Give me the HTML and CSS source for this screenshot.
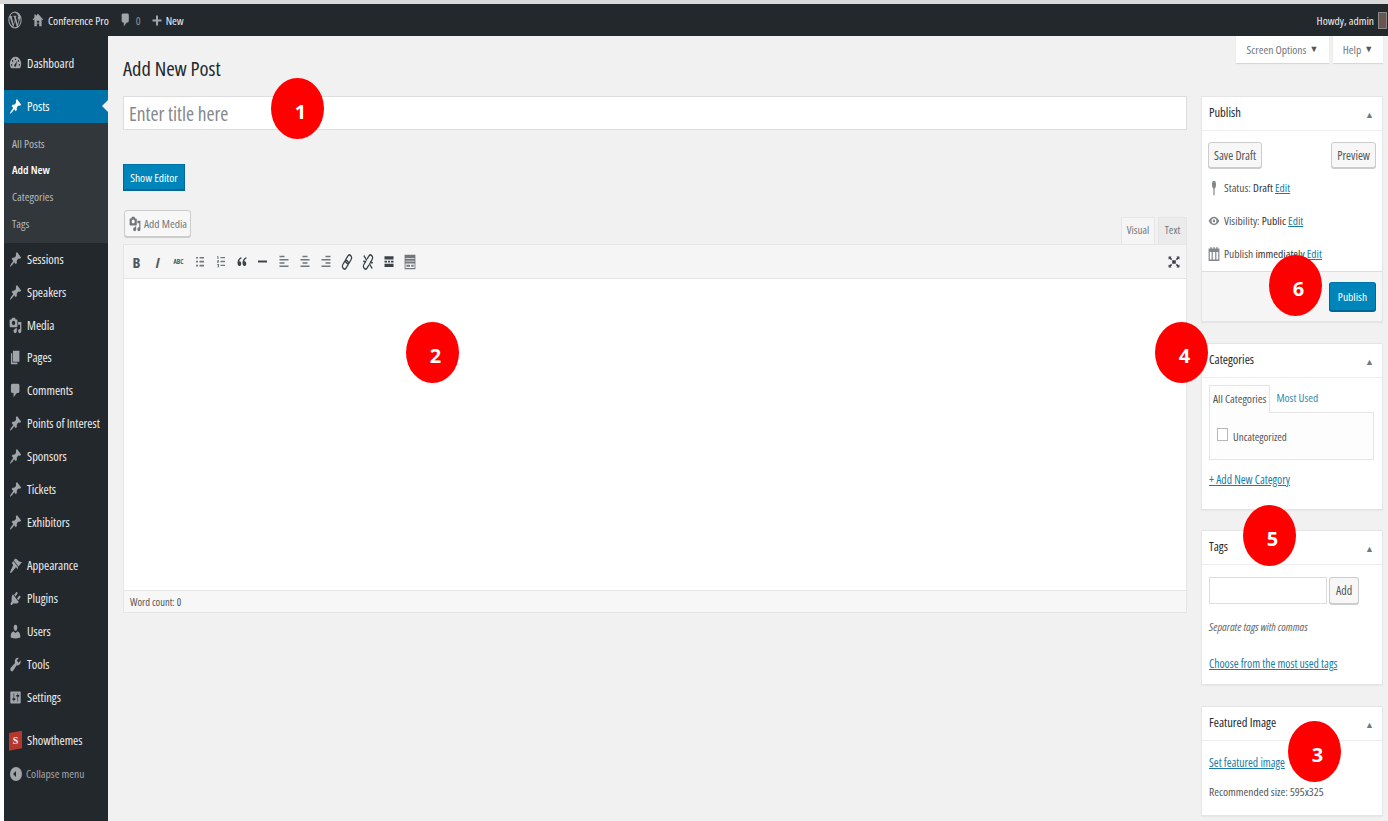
FILE: index.html
```html
<!DOCTYPE html>
<html lang="en">
  <head>
    <meta charset="UTF-8" />
    <title>Add New Post</title>
    <link rel="stylesheet" href="styles.css">
  </head>
  <body>
    <svg class="defs" width="0" height="0">
      <symbol id="i-pin" viewBox="0 0 20 20" preserveAspectRatio="none"><path d="M10.440 3.020l1.820-1.820 6.360 6.350-1.830 1.820c-1.050-.68-2.480-.57-3.410.36l-.75.750c-.92.930-1.040 2.350-.35 3.410l-1.830 1.820-2.410-2.410-2.800 2.790c-.42.420-3.380 2.710-3.800 2.290s1.860-3.390 2.280-3.810l2.790-2.790L4.100 9.360l1.830-1.820c1.050.690 2.480.570 3.400-.36l.750-.750c.930-.920 1.050-2.350.360-3.410z"/></symbol>
      <symbol id="i-media" viewBox="0 0 20 20" preserveAspectRatio="none"><path d="M13 11V4c0-.55-.45-1-1-1h-1.670L9 1H5L3.670 3H2c-.55 0-1 .45-1 1v7c0 .55.45 1 1 1h10c.55 0 1-.45 1-1zM7 4.500c1.380 0 2.500 1.120 2.500 2.500S8.380 9.500 7 9.500 4.500 8.380 4.500 7 5.620 4.500 7 4.500zM14 6h5v10.500c0 1.380-1.120 2.500-2.500 2.500S14 17.880 14 16.500s1.120-2.500 2.500-2.500c.17 0 .34.020.5.050V9h-3V6zm-4 8.050V13h2v3.500c0 1.380-1.120 2.500-2.500 2.500S7 17.880 7 16.500 8.120 14 9.500 14c.17 0 .34.020.5.050z"/></symbol>
      <symbol id="i-pages" viewBox="0 0 20 20" preserveAspectRatio="none"><path d="M6 15V2h10v13H6zm-1 1h8v2H3V5h2v11z"/></symbol>
      <symbol id="i-bubble" viewBox="0 0 20 20" preserveAspectRatio="none"><path d="M5 2h9c1.100 0 2 .9 2 2v7c0 1.100-.9 2-2 2h-2l-5 5v-5H5c-1.100 0-2-.9-2-2V4c0-1.100.9-2 2-2z"/></symbol>
      <symbol id="i-brush" viewBox="0 0 20 20" preserveAspectRatio="none"><path d="M14.480 11.060L7.410 3.990l1.500-1.500c.5-.56 2.300-.47 3.510.32 1.210.8 1.430 1.280 2.910 2.100 1.180.64 2.450 1.260 4.670.85zm-.71.71L6.700 4.700 4.930 6.470c-.39.39-.39 1.020 0 1.410l1.060 1.060c.39.39.39 1.030 0 1.420L2 17c-.5.500-.5 1 0 1.500s1 .5 1.500 0l6.500-6c.4-.4 1-.4 1.400 0l1 1c.4.4 1 .4 1.400 0z"/></symbol>
      <symbol id="i-plugin" viewBox="0 0 20 20" preserveAspectRatio="none"><path d="M13.110 4.360L9.870 7.600 8 5.730l3.240-3.240c.35-.34 1.050-.2 1.560.32.520.51.660 1.210.310 1.550zm-8 1.770l.91-1.120 9.010 9.010-1.190.84c-.71.71-2.630 1.160-3.820 1.160H6.140L4.900 17.260c-.59.59-1.540.59-2.120 0-.59-.58-.59-1.530 0-2.120l1.240-1.240v-3.880c0-1.130.4-3.190 1.090-3.890zm7.260 3.970l3.240-3.240c.34-.35 1.040-.21 1.550.31.520.51.660 1.210.310 1.550l-3.240 3.250z"/></symbol>
      <symbol id="i-user" viewBox="0 0 20 20" preserveAspectRatio="none"><path d="M10 9.250c-2.270 0-2.730-3.440-2.730-3.440C7 4.020 7.820 2 9.970 2c2.160 0 2.980 2.020 2.710 3.810 0 0-.41 3.440-2.680 3.440zm0 2.570L12.720 10c2.390 0 4.520 2.330 4.520 4.530v2.490s-3.650 1.130-7.240 1.130c-3.650 0-7.240-1.130-7.240-1.130v-2.490c0-2.250 1.940-4.480 4.470-4.480z"/></symbol>
      <symbol id="i-tool" viewBox="0 0 20 20" preserveAspectRatio="none"><path d="M16.680 9.770c-1.340 1.340-3.300 1.670-4.950.99l-5.410 6.520c-.99.99-2.590.99-3.580 0s-.99-2.590 0-3.570l6.520-5.420c-.68-1.650-.35-3.610.99-4.950 1.280-1.280 3.120-1.620 4.720-1.060l-2.890 2.890 2.820 2.820 2.860-2.870c.53 1.580.18 3.400-1.080 4.650z"/></symbol>
      <symbol id="i-settings" viewBox="0 0 20 20" preserveAspectRatio="none"><path d="M18 16V4c0-.55-.45-1-1-1H3c-.55 0-1 .45-1 1v12c0 .55.45 1 1 1h14c.55 0 1-.45 1-1zM8 11h1c.55 0 1 .45 1 1s-.45 1-1 1H8v1.500c0 .28-.22.5-.5.5s-.5-.22-.5-.5V13H6c-.55 0-1-.45-1-1s.45-1 1-1h1V5.500c0-.28.22-.5.5-.5s.5.22.5.5V11zm5-2h-1c-.55 0-1-.45-1-1s.45-1 1-1h1V5.500c0-.28.22-.5.5-.5s.5.22.5.5V7h1c.55 0 1 .45 1 1s-.45 1-1 1h-1v5.500c0 .28-.22.5-.5.5s-.5-.22-.5-.5V9z"/></symbol>
      <symbol id="i-dash" viewBox="0 0 20 20" preserveAspectRatio="none"><path fill-rule="evenodd" d="M10 2a8.500 8.500 0 0 1 7 13.500H3A8.500 8.500 0 0 1 10 2zM10 4a1 1 0 1 0 0 2 1 1 0 0 0 0-2zM5.500 6a1 1 0 1 0 0 2 1 1 0 0 0 0-2zM14.500 6a1 1 0 1 0 0 2 1 1 0 0 0 0-2zM4 10.500a1 1 0 1 0 0 2 1 1 0 0 0 0-2zM16 10.500a1 1 0 1 0 0 2 1 1 0 0 0 0-2zM12.500 7L9 11a1.500 1.500 0 1 0 2 1.500z"/></symbol>
      <symbol id="i-ul" viewBox="0 0 20 20" preserveAspectRatio="none"><path d="M2 3h4v2.500H2zM9 3h9v2.500H9zM2 9h4v2.500H2zM9 9h9v2.500H9zM2 15h4v2.500H2zM9 15h9v2.500H9z"/></symbol>
      <symbol id="i-ol" viewBox="0 0 20 20" preserveAspectRatio="none"><path d="M2 2h3v4H3V3.500H2zM9 3h9v2H9zM2 8h4v2L4 11h2v1H2v-2l2-1H2zM9 9h9v2H9zM2 14h4v5H2v-1h2v-1H3v-1h1v-1H2zM9 15h9v2H9z"/></symbol>
      <symbol id="i-quote" viewBox="0 0 20 20" preserveAspectRatio="none"><path d="M8.500 3C4 4.500 1 7.500 1 12c0 3 1.500 5 3.700 5S8.500 15.500 8.500 13.300 7 9.800 5 9.800c-.3 0-.5 0-.7.100C4.700 7.800 6.300 6.300 9 5.200zM18.500 3C14 4.500 11 7.500 11 12c0 3 1.500 5 3.700 5s3.800-1.500 3.800-3.700-1.500-3.500-3.500-3.500c-.3 0-.5 0-.7.100.4-2.100 2-3.600 4.700-4.700z"/></symbol>
      <symbol id="i-hr" viewBox="0 0 20 20" preserveAspectRatio="none"><path d="M0 8.500h20v3H0z"/></symbol>
      <symbol id="i-left" viewBox="0 0 20 20" preserveAspectRatio="none"><path d="M1 1h10v2.500H1zM1 6h18v2.500H1zM1 11h10v2.500H1zM1 16h18v2.500H1z"/></symbol>
      <symbol id="i-center" viewBox="0 0 20 20" preserveAspectRatio="none"><path d="M5 1h10v2.500H5zM1 6h18v2.500H1zM5 11h10v2.500H5zM1 16h18v2.500H1z"/></symbol>
      <symbol id="i-right" viewBox="0 0 20 20" preserveAspectRatio="none"><path d="M9 1h10v2.500H9zM1 6h18v2.500H1zM9 11h10v2.500H9zM1 16h18v2.500H1z"/></symbol>
      <symbol id="i-link" viewBox="0 0 20 20" preserveAspectRatio="none"><g fill="none" stroke="currentColor" stroke-width="2" transform="rotate(38 10 10)"><rect x="6.500" y="0" width="7" height="11.500" rx="3.500"/><rect x="6.500" y="8.500" width="7" height="11.500" rx="3.500"/></g></symbol>
      <symbol id="i-unlink" viewBox="0 0 20 20" preserveAspectRatio="none"><g fill="none" stroke="currentColor" stroke-width="2" transform="rotate(38 10 10)"><path d="M6.500 8V3.500a3.500 3.500 0 0 1 7 0V8M6.500 12v4.500a3.500 3.500 0 0 0 7 0V12"/></g><path fill="none" stroke="currentColor" stroke-width="2" d="M3 2l5 6M12 12l5 6M2 9l5 .5M13 10.500l5 .5"/></symbol>
      <symbol id="i-more" viewBox="0 0 20 20" preserveAspectRatio="none"><path d="M1 2h18v5H1zM1 9h5v2.500H1zM8 9h4v2.500H8zM14 9h5v2.500h-5zM1 13.500h18v5H1z"/></symbol>
      <symbol id="i-kitchen" viewBox="0 0 20 20" preserveAspectRatio="none"><path fill-rule="evenodd" d="M1 1h18v18H1zM2.500 5v1h15V5zM2.500 8.500v1h15v-1zM2.500 12v5.500h15V12zM4 13.500h6v2.500H4zM12 13.500h4v2.500h-4z"/></symbol>
      <symbol id="i-full" viewBox="0 0 20 20" preserveAspectRatio="none"><path d="M1 1h5L4.500 2.700 7 5.200 5.200 7 2.700 4.500 1 6zM19 1v5l-1.700-1.500L14.800 7 13 5.200l2.500-2.500L14 1zM1 19v-5l1.700 1.500L5.200 13 7 14.800l-2.500 2.500L6 19zM19 19h-5l1.500-1.700L13 14.800l1.800-1.800 2.500 2.500L19 14zM7 7h6v6H7z"/></symbol>
      <symbol id="i-eye" viewBox="0 0 20 20" preserveAspectRatio="none"><path fill-rule="evenodd" d="M10 4c4 0 7 3 9 6-2 3-5 6-9 6s-7-3-9-6c2-3 5-6 9-6zM10 6a4 4 0 1 0 0 8 4 4 0 0 0 0-8zM10 8a2 2 0 1 1 0 4 2 2 0 0 1 0-4z"/></symbol>
      <symbol id="i-cal" viewBox="0 0 20 20" preserveAspectRatio="none"><path fill-rule="evenodd" d="M4 0h2v2h3V0h2v2h3V0h2v2h3v18H1V2h3zM3 7v11h3V7zM8 7v11h4V7zM14 7v11h3V7z"/></symbol>
      <symbol id="i-status" viewBox="0 0 20 20" preserveAspectRatio="none"><path d="M10 1a5 5 0 0 1 1.500 9.800V19h-3v-8.200A5 5 0 0 1 10 1z"/></symbol>
      <symbol id="i-wp" viewBox="0 0 20 20" preserveAspectRatio="none"><path fill-rule="evenodd" d="M10 .5a9.500 9.500 0 1 1 0 19 9.500 9.500 0 0 1 0-19zM10 2a8 8 0 0 0-6.700 3.600h.6c.8 0 2.100-.1 2.100-.1.400 0 .5.600 0 .6l-.9.100 2.900 8.600 1.700-5.200L8.500 6.100l-.8-.1c-.4 0-.4-.6.100-.6 0 0 1.300.1 2 .1s2.100-.1 2.100-.1c.4 0 .5.600 0 .6l-.9.100 2.900 8.600.8-2.600c.6-1.900.2-3-.5-4.100-.5-.8-.3-1.900.8-2A8 8 0 0 0 10 2zM2.600 7A8 8 0 0 0 7 17.200zM10.100 10.700l-2.400 7a8 8 0 0 0 4.900-.1zM17.100 6.600c.3 2.400-.8 4.300-3.200 10.400A8 8 0 0 0 17.100 6.600z"/></symbol>
      <symbol id="i-home" viewBox="0 0 20 20" preserveAspectRatio="none"><path fill-rule="evenodd" d="M10 1l9 8.500-1 1L16 9v10H4V9l-2 1.500-1-1 3-2.900V2h2.500v2.300zM8 11v3h4v-3zM8 15v4h4v-4z"/></symbol>
      <symbol id="i-plus" viewBox="0 0 20 20" preserveAspectRatio="none"><path d="M8 1h4v7h7v4h-7v7H8v-7H1V8h7z"/></symbol>
    </svg>

    <div class="topline"></div>
    <div class="adminbar">
      <svg class="bar-ico wp"><use href="#i-wp"/></svg>
      <svg class="bar-ico home"><use href="#i-home"/></svg>
      <span class="bar-txt">Conference Pro</span>
      <svg class="bar-ico bub"><use href="#i-bubble"/></svg>
      <span class="bar-txt dim">0</span>
      <svg class="bar-ico plus"><use href="#i-plus"/></svg>
      <span class="bar-txt">New</span>
      <span class="howdy">Howdy, admin</span>
      <span class="avatar"></span>
    </div>

    <div class="wrap">
      <nav class="side">
        <a class="item first"><svg><use href="#i-dash"/></svg>Dashboard</a>
        <a class="item current"><svg><use href="#i-pin"/></svg>Posts</a>
        <div class="sub">
          <a>All Posts</a>
          <a class="on">Add New</a>
          <a>Categories</a>
          <a>Tags</a>
        </div>
        <a class="item"><svg><use href="#i-pin"/></svg>Sessions</a>
        <a class="item"><svg><use href="#i-pin"/></svg>Speakers</a>
        <a class="item"><svg><use href="#i-media"/></svg>Media</a>
        <a class="item"><svg><use href="#i-pages"/></svg>Pages</a>
        <a class="item"><svg><use href="#i-bubble"/></svg>Comments</a>
        <a class="item"><svg><use href="#i-pin"/></svg>Points of Interest</a>
        <a class="item"><svg><use href="#i-pin"/></svg>Sponsors</a>
        <a class="item"><svg><use href="#i-pin"/></svg>Tickets</a>
        <a class="item"><svg><use href="#i-pin"/></svg>Exhibitors</a>
        <a class="item gap"><svg><use href="#i-brush"/></svg>Appearance</a>
        <a class="item"><svg><use href="#i-plugin"/></svg>Plugins</a>
        <a class="item"><svg><use href="#i-user"/></svg>Users</a>
        <a class="item"><svg><use href="#i-tool"/></svg>Tools</a>
        <a class="item"><svg><use href="#i-settings"/></svg>Settings</a>
        <a class="item gap"><span class="st-logo">S</span>Showthemes</a>
        <a class="item collapse"><span class="coll-ico"></span>Collapse menu</a>
      </nav>

      <main class="content">
        <div class="tabs-top">
          <span class="meta-tab screen">Screen Options <i>▼</i></span>
          <span class="meta-tab help">Help <i>▼</i></span>
        </div>
        <div class="cols">
          <div class="main-col">
            <h1>Add New Post</h1>
            <div class="title-input">Enter title here</div>
            <button class="btn primary show-editor">Show Editor</button>
            <div class="media-row">
              <button class="btn media-btn"><svg><use href="#i-media"/></svg>Add Media</button>
              <div class="ed-tabs"><span class="ed-tab active">Visual</span><span class="ed-tab">Text</span></div>
            </div>
            <div class="editor">
              <div class="toolbar">
                <span class="tb b">B</span>
                <span class="tb i">I</span>
                <span class="tb abc">ABC</span>
                <span class="tb lines"><svg><use href="#i-ul"/></svg></span>
                <span class="tb lines"><svg><use href="#i-ol"/></svg></span>
                <span class="tb"><svg><use href="#i-quote"/></svg></span>
                <span class="tb hr"><svg><use href="#i-hr"/></svg></span>
                <span class="tb lines"><svg><use href="#i-left"/></svg></span>
                <span class="tb lines"><svg><use href="#i-center"/></svg></span>
                <span class="tb lines"><svg><use href="#i-right"/></svg></span>
                <span class="tb big"><svg><use href="#i-link"/></svg></span>
                <span class="tb big"><svg><use href="#i-unlink"/></svg></span>
                <span class="tb"><svg><use href="#i-more"/></svg></span>
                <span class="tb big lines"><svg><use href="#i-kitchen"/></svg></span>
                <span class="tb full"><svg><use href="#i-full"/></svg></span>
              </div>
              <div class="ed-area"></div>
              <div class="ed-status">Word count: 0</div>
            </div>
          </div>

          <aside class="side-col">
            <section class="box publish">
              <header>Publish<i>▲</i></header>
              <div class="pub-btns">
                <button class="btn">Save Draft</button>
                <button class="btn">Preview</button>
              </div>
              <div class="pub-line first"><svg class="thin"><use href="#i-status"/></svg><span>Status: <b>Draft</b> <a>Edit</a></span></div>
              <div class="pub-line"><svg><use href="#i-eye"/></svg><span>Visibility: <b>Public</b> <a>Edit</a></span></div>
              <div class="pub-line"><svg><use href="#i-cal"/></svg><span>Publish <b>immediately</b> <a>Edit</a></span></div>
              <div class="pub-foot"><button class="btn primary">Publish</button></div>
            </section>

            <section class="box cats">
              <header>Categories<i>▲</i></header>
              <div class="cat-tabs"><span class="cat-tab active">All Categories</span><span class="cat-tab link">Most Used</span></div>
              <div class="cat-list"><span class="check"></span>Uncategorized</div>
              <a class="box-link add-cat">+ Add New Category</a>
            </section>

            <section class="box tags">
              <header>Tags<i>▲</i></header>
              <div class="tag-row"><span class="tag-input"></span><button class="btn">Add</button></div>
              <p class="howto">Separate tags with commas</p>
              <a class="box-link most-used">Choose from the most used tags</a>
            </section>

            <section class="box featured">
              <header>Featured Image<i>▲</i></header>
              <a class="box-link set-img">Set featured image</a>
              <p class="rec">Recommended size: 595x325</p>
            </section>
          </aside>
        </div>
      </main>
    </div>

    <span class="mark m1">1</span>
    <span class="mark m2">2</span>
    <span class="mark m3">3</span>
    <span class="mark m4">4</span>
    <span class="mark m5">5</span>
    <span class="mark m6">6</span>
  </body>
</html>
```

FILE: styles.css
```css
:root {
  font-family: "Open Sans", "Liberation Sans", sans-serif;
  font-stretch: 75%;
  --blue: #0073aa;
  --dark: #23282d;
}
* {
  box-sizing: border-box;
}
html, body {
  height: 821px;
  overflow: hidden;
}
body {
  margin: 0;
  padding-left: 4px;
  background: #fff;
  font-size: 12px;
  color: #444;
  position: relative;
}
.defs {
  position: absolute;
}
svg {
  fill: currentColor;
}
.topline {
  height: 4px;
  margin-left: -4px;
  background: #d9d9d9;
}

/* admin bar */
.adminbar {
  height: 32px;
  background: var(--dark);
  color: #eee;
  display: flex;
  align-items: center;
}
.bar-ico {
  color: #a0a5aa;
  flex: none;
}
.bar-ico.wp {
  width: 14px;
  height: 18px;
  margin-left: 4px;
}
.bar-ico.home {
  width: 12px;
  height: 14px;
  margin-left: 10px;
}
.bar-ico.bub {
  width: 11px;
  height: 16px;
  margin-left: 11px;
}
.bar-ico.plus {
  width: 10px;
  height: 11px;
  margin-left: 11px;
}
.bar-txt {
  margin-left: 4px;
  font-size: 11.500px;
}
.bar-txt.dim {
  color: #8c9196;
  margin-left: 5px;
}
.howdy {
  margin-left: auto;
  font-size: 11.500px;
}
.avatar {
  width: 9px;
  height: 17px;
  margin: 0 1px 0 4px;
  background: #6a5650;
  border: 1px solid #888;
}

.wrap {
  display: flex;
  height: 785px;
}

/* left menu */
.side {
  width: 104px;
  flex: none;
  background: var(--dark);
  color: #eee;
  padding-top: 11px;
}
.item {
  display: flex;
  align-items: center;
  height: 32.900px;
  font-size: 12.500px;
  white-space: nowrap;
}
.item svg {
  width: 13px;
  height: 17px;
  margin-left: 5px;
  margin-right: 5px;
  color: #a0a5aa;
  flex: none;
}
.item.first {
  margin-bottom: 10px;
}
.item.gap {
  margin-top: 10.500px;
}
.item.current {
  background: var(--blue);
  color: #fff;
  position: relative;
}
.item.current svg {
  color: #fff;
}
.item.current::after {
  content: "";
  position: absolute;
  right: 0;
  top: 10px;
  border: 6px solid transparent;
  border-right-color: #f1f1f1;
  border-left: 0;
}
.sub {
  background: #32373c;
  height: 120px;
  padding-top: 8px;
  font-size: 11.500px;
  color: #b4b9be;
}
.sub a {
  display: block;
  height: 26.600px;
  line-height: 26px;
  padding-left: 8px;
}
.sub .on {
  color: #fff;
  font-weight: 600;
}
.st-logo {
  width: 13px;
  height: 20px;
  margin: 0 5px;
  background: #b5372e;
  color: #eee;
  font: bold 10px "Liberation Serif", serif;
  text-align: center;
  line-height: 20px;
  flex: none;
  clip-path: polygon(0 12%, 100% 0, 100% 88%, 0 100%);
}
.collapse {
  color: #a0a5aa;
  font-size: 11.500px;
}
.coll-ico {
  width: 12px;
  height: 14px;
  border-radius: 50%;
  background: #a0a5aa;
  margin: 0 4px 0 6px;
  flex: none;
  position: relative;
}
.coll-ico::after {
  content: "";
  position: absolute;
  left: 3px;
  top: 4px;
  border: 3px solid transparent;
  border-right-color: var(--dark);
  border-left: 0;
}

/* content */
.content {
  flex: 1;
  background: #f1f1f1;
  min-width: 0;
  position: relative;
}
.tabs-top {
  display: flex;
  justify-content: flex-end;
  gap: 4px;
  padding-right: 5px;
  height: 28px;
}
.meta-tab {
  background: #fff;
  height: 27px;
  text-align: center;
  font-size: 11.500px;
  line-height: 25px;
  color: #72777c;
  box-shadow: 0 1px 1px rgba(0, 0, 0, .1);
}
.meta-tab.screen {
  width: 93px;
}
.meta-tab.help {
  width: 50px;
}
.meta-tab i {
  font-style: normal;
  font-size: 9px;
  vertical-align: 2px;
  margin-left: 1px;
  color: #555;
}
.cols {
  display: flex;
  padding-left: 15px;
}
.main-col {
  width: 1064px;
  flex: none;
  margin-top: -28px;
}
h1 {
  margin: 0;
  padding-top: 16px;
  height: 60px;
  font-weight: 400;
  font-size: 20.500px;
  line-height: 32px;
  color: #23282d;
}
.title-input {
  height: 34px;
  background: #fff;
  border: 1px solid #ddd;
  font-size: 19.500px;
  line-height: 33px;
  padding-left: 5px;
  color: #84898e;
}
.btn {
  font: inherit;
  font-size: 12px;
  color: #555;
  background: #f7f7f7;
  border: 1px solid #ccc;
  border-radius: 3px;
  box-shadow: 0 1px 0 #ccc;
  height: 26px;
  padding: 0 5px;
  white-space: nowrap;
}
.btn.primary {
  background: #0085ba;
  border-color: #0073aa #006799 #006799;
  box-shadow: 0 1px 0 #006799;
  color: #fff;
}
.show-editor {
  display: block;
  margin-top: 34px;
  width: 62px;
  padding: 0;
  height: 26px;
  border-radius: 0;
  font-size: 11.500px;
}
.media-row {
  display: flex;
  justify-content: space-between;
  align-items: flex-end;
  margin-top: 20px;
  padding-left: 1px;
  height: 34px;
}
.media-btn {
  display: flex;
  align-items: center;
  height: 27px;
  width: 67px;
  align-self: flex-start;
  padding: 0 4px;
  color: #72777c;
  font-size: 11.500px;
}
.media-btn svg {
  width: 12px;
  height: 16px;
  margin-right: 3px;
  color: #72777c;
  flex: none;
}
.ed-tabs {
  display: flex;
  gap: 3px;
}
.ed-tab {
  height: 27px;
  width: 29px;
  text-align: center;
  line-height: 24px;
  font-size: 11px;
  color: #72777c;
  background: #ebebeb;
  border: 1px solid #e5e5e5;
  border-bottom: 0;
}
.ed-tab.active {
  background: #f5f5f5;
  width: 34px;
}
.editor {
  border: 1px solid #e5e5e5;
  background: #fff;
}
.toolbar {
  height: 34px;
  background: #f5f5f5;
  border-bottom: 1px solid #e5e5e5;
  display: flex;
  align-items: center;
  padding-left: 2px;
  color: #3c4248;
}
.tb {
  width: 21px;
  height: 16px;
  display: flex;
  align-items: center;
  justify-content: center;
}
.tb svg {
  width: 10px;
  height: 13px;
}
.tb.lines {
  color: #72777c;
}
.tb.hr svg {
  width: 9px;
}
.tb.big svg {
  width: 12px;
  height: 16px;
}
.tb.b {
  font-size: 15px;
  font-weight: 700;
  color: #50565c;
}
.tb.i {
  font-size: 15px;
  font-style: italic;
  font-weight: 700;
  color: #50565c;
}
.tb.abc {
  font-size: 7px;
  font-weight: 600;
}
.tb.full {
  margin-left: auto;
  margin-right: 2px;
}
.tb.full svg {
  width: 12px;
  height: 12px;
}
.ed-area {
  height: 311px;
}
.ed-status {
  height: 22px;
  background: #f7f7f7;
  border-top: 1px solid #e5e5e5;
  font-size: 10.500px;
  line-height: 23px;
  padding-left: 6px;
  color: #555;
}

/* side boxes */
.side-col {
  width: 182px;
  margin-left: 14px;
  flex: none;
  padding-top: 32px;
}
.box {
  background: #fff;
  border: 1px solid #e5e5e5;
  box-shadow: 0 1px 1px rgba(0, 0, 0, .04);
  position: relative;
}
.box header {
  height: 34px;
  border-bottom: 1px solid #eee;
  padding: 0 8px 0 7px;
  font-size: 12.500px;
  line-height: 32px;
  color: #23282d;
  font-weight: 500;
  display: flex;
  justify-content: space-between;
}
.box header i {
  font-style: normal;
  font-size: 9px;
  color: #72777c;
  line-height: 36px;
}
.publish {
  height: 226px;
}
.pub-btns {
  display: flex;
  justify-content: space-between;
  padding: 11px 6px 0 6px;
}
.pub-line {
  display: flex;
  align-items: center;
  height: 33px;
  padding-left: 6px;
  font-size: 11.500px;
  color: #555;
  white-space: pre;
}
.pub-line.first {
  margin-top: 3px;
}
.pub-line svg {
  width: 12px;
  height: 14px;
  color: #82878c;
  margin-right: 4px;
  flex: none;
}
.pub-line svg.thin {
  width: 8px;
  height: 16px;
  margin: 0 6px 0 2px;
}
.pub-line b {
  font-weight: 500;
  color: #333;
}
.pub-line a, .box-link {
  color: #1a7ba6;
  text-decoration: underline;
}
.pub-foot {
  position: absolute;
  left: 0;
  right: 0;
  bottom: 0;
  height: 50px;
  background: #f5f5f5;
  border-top: 1px solid #ddd;
  display: flex;
  justify-content: flex-end;
  padding: 10px 6px 0 0;
}
.pub-foot .btn {
  width: 47px;
  height: 29px;
  padding: 0;
  font-size: 11.500px;
}
.cats {
  height: 167px;
  margin-top: 21px;
}
.cat-tabs {
  display: flex;
  margin: 7px 0 0 7px;
  font-size: 11.500px;
  height: 28px;
  position: relative;
  z-index: 1;
}
.cat-tab {
  padding: 0 5px;
  line-height: 26px;
}
.cat-tab.link {
  color: #3a8bb0;
  margin-left: 1px;
}
.cat-tab.active {
  background: #fdfdfd;
  border: 1px solid #e5e5e5;
  border-bottom: 0;
  padding: 0 3px;
  color: #555;
}
.cat-list {
  margin: -1px 8px 0 7px;
  height: 48px;
  background: #fdfdfd;
  border: 1px solid #e5e5e5;
  display: flex;
  align-items: center;
  padding-left: 7px;
  font-size: 11px;
  color: #555;
}
.check {
  width: 11px;
  height: 13px;
  border: 1px solid #b4b9be;
  background: #fff;
  margin-right: 5px;
  margin-top: -4px;
}
.box-link {
  display: block;
  font-size: 11.700px;
  padding-left: 7px;
}
.add-cat {
  margin-top: 11px;
}
.tags {
  height: 155px;
  margin-top: 20px;
}
.tag-row {
  display: flex;
  gap: 2px;
  padding: 12px 0 0 7px;
}
.tag-input {
  width: 118px;
  height: 27px;
  border: 1px solid #ddd;
}
.tag-row .btn {
  height: 27px;
  padding: 0 6px;
}
.howto {
  margin: 15px 0 0 7px;
  font-size: 11.300px;
  font-style: italic;
  color: #666;
}
.most-used {
  margin-top: 21px;
}
.featured {
  height: 110px;
  margin-top: 21px;
}
.set-img {
  margin-top: 13px;
}
.rec {
  margin: 14px 0 0 7px;
  font-size: 11.500px;
  color: #555;
}

/* numbered markers laid over the page */
.mark {
  position: absolute;
  width: 53px;
  height: 61px;
  padding: 6px 0 0 6px;
  border-radius: 50%;
  background: #ff0000;
  color: #fff;
  font-stretch: 100%;
  font-weight: 700;
  font-size: 20px;
  display: flex;
  align-items: center;
  justify-content: center;
}
.m1 {
  left: 271px;
  top: 78px;
}
.m2 {
  left: 406px;
  top: 322px;
}
.m3 {
  left: 1288px;
  top: 721px;
}
.m4 {
  left: 1155px;
  top: 322px;
}
.m5 {
  left: 1243px;
  top: 505px;
}
.m6 {
  left: 1269px;
  top: 255px;
}
```
